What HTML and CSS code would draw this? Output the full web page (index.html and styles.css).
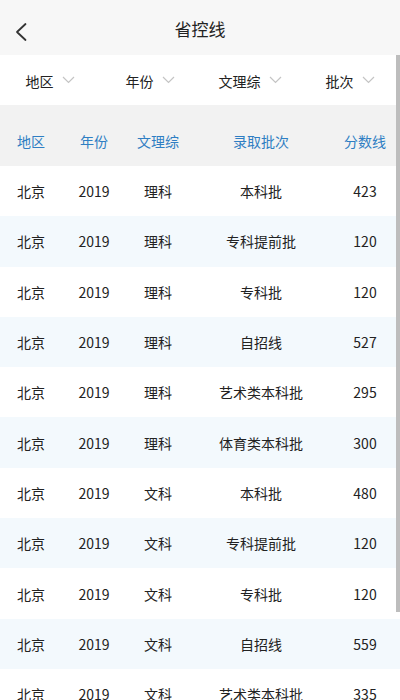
FILE: index.html
```html
<!DOCTYPE html>
<html lang="zh">
<head>
<meta charset="utf-8">
<link rel="stylesheet" href="styles.css">
</head>
<body>
<div class="app">
  <header class="topbar">
    <svg class="back" width="14" height="20" viewBox="0 0 14 20"><path d="M11.5 2 L3 10 L11.5 18" fill="none" stroke="#333" stroke-width="1.8" stroke-linecap="round" stroke-linejoin="round"/></svg>
    <div class="title">省控线</div>
  </header>
  <div class="filters">
    <div class="filter"><span>地区</span><svg class="chev" width="13" height="8" viewBox="0 0 13 8"><path d="M1 1 L6.5 6.5 L12 1" fill="none" stroke="#c4c4c4" stroke-width="1.2"/></svg></div>
    <div class="filter"><span>年份</span><svg class="chev" width="13" height="8" viewBox="0 0 13 8"><path d="M1 1 L6.5 6.5 L12 1" fill="none" stroke="#c4c4c4" stroke-width="1.2"/></svg></div>
    <div class="filter"><span>文理综</span><svg class="chev" width="13" height="8" viewBox="0 0 13 8"><path d="M1 1 L6.5 6.5 L12 1" fill="none" stroke="#c4c4c4" stroke-width="1.2"/></svg></div>
    <div class="filter"><span>批次</span><svg class="chev" width="13" height="8" viewBox="0 0 13 8"><path d="M1 1 L6.5 6.5 L12 1" fill="none" stroke="#c4c4c4" stroke-width="1.2"/></svg></div>
  </div>
  <div class="table">
    <div class="row head"><div>地区</div><div>年份</div><div>文理综</div><div>录取批次</div><div>分数线</div></div>
    <div class="row"><div>北京</div><div>2019</div><div>理科</div><div>本科批</div><div>423</div></div>
    <div class="row alt"><div>北京</div><div>2019</div><div>理科</div><div>专科提前批</div><div>120</div></div>
    <div class="row"><div>北京</div><div>2019</div><div>理科</div><div>专科批</div><div>120</div></div>
    <div class="row alt"><div>北京</div><div>2019</div><div>理科</div><div>自招线</div><div>527</div></div>
    <div class="row"><div>北京</div><div>2019</div><div>理科</div><div>艺术类本科批</div><div>295</div></div>
    <div class="row alt"><div>北京</div><div>2019</div><div>理科</div><div>体育类本科批</div><div>300</div></div>
    <div class="row"><div>北京</div><div>2019</div><div>文科</div><div>本科批</div><div>480</div></div>
    <div class="row alt"><div>北京</div><div>2019</div><div>文科</div><div>专科提前批</div><div>120</div></div>
    <div class="row"><div>北京</div><div>2019</div><div>文科</div><div>专科批</div><div>120</div></div>
    <div class="row alt"><div>北京</div><div>2019</div><div>文科</div><div>自招线</div><div>559</div></div>
    <div class="row"><div>北京</div><div>2019</div><div>文科</div><div>艺术类本科批</div><div>335</div></div>
  </div>
  <div class="scrollthumb"></div>
</div>
</body>
</html>
```
FILE: styles.css
```css
html, body {
  margin: 0;
  padding: 0;
  height: 700px;
  overflow: hidden;
  background: #fff;
}
body {
  font-family: "Noto Sans CJK SC", "Noto Sans", sans-serif;
  color: #222;
}
.app {
  position: relative;
  width: 400px;
  height: 700px;
  overflow: hidden;
}
.topbar {
  height: 55px;
  background: #f7f7f7;
  display: flex;
  align-items: center;
  justify-content: center;
  position: relative;
}
.back {
  position: absolute;
  left: 14px;
  top: 22px;
}
.title {
  font-size: 17px;
  color: #222;
  line-height: 1;
  margin-top: 2px;
}
.filters {
  height: 50px;
  display: grid;
  grid-template-columns: repeat(4, 100px);
  background: #fff;
}
.filter {
  display: flex;
  align-items: center;
  justify-content: center;
  gap: 8px;
  font-size: 14px;
  color: #222;
  padding-top: 1px;
}
.chev {
  display: block;
  margin-top: -1px;
}
.table {
  display: flex;
  flex-direction: column;
}
.row {
  display: grid;
  grid-template-columns: 62px 64px 64px 142px 66px;
  height: 50.3px;
  align-items: center;
  font-size: 14px;
  color: #222;
  background: #fff;
}
.row > div {
  text-align: center;
}
.row.alt {
  background: #f3f9fd;
}
.row.head {
  height: 61px;
  background: #f2f2f2;
  color: #2f7ec3;
  padding-top: 10px;
  box-sizing: border-box;
}
.scrollthumb {
  position: absolute;
  right: 0;
  top: 55px;
  width: 4px;
  height: 557px;
  background: #bdbdbd;
}
```
